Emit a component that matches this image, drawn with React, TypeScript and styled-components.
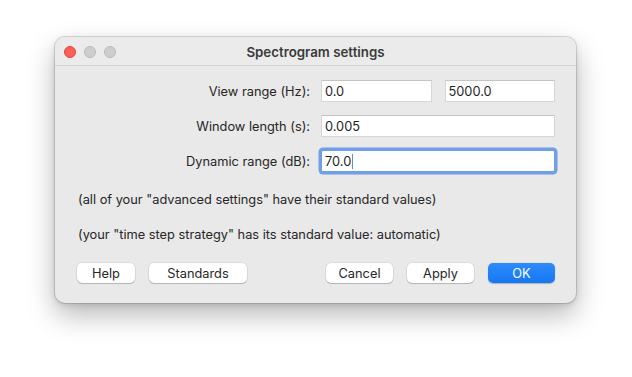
import React from "react";
import styled, { createGlobalStyle } from "styled-components";

const Global = createGlobalStyle`
  html, body { margin: 0; padding: 0; background: #ffffff; }
  body { font-family: Inter, "Liberation Sans", Arial, sans-serif; }
`;

const Page = styled.div`
  width: 632px;
  height: 377px;
  padding: 37px 0 0 55px;
  box-sizing: border-box;
  background: #ffffff;
`;

const Window = styled.div`
  width: 521px;
  height: 266px;
  box-sizing: border-box;
  background: #e9e9e9;
  border-radius: 10px;
  box-shadow: 0 0 0 1px rgba(0, 0, 0, 0.12), 0 12px 28px rgba(0, 0, 0, 0.28),
    0 2px 6px rgba(0, 0, 0, 0.12);
  display: flex;
  flex-direction: column;
  overflow: hidden;
  color: #262626;
  font-size: 12.8px;
`;

const TitleBar = styled.div`
  position: relative;
  height: 29px;
  box-sizing: border-box;
  border-bottom: 1px solid #d3d3d3;
  background: #ebebeb;
  display: flex;
  align-items: center;
  justify-content: center;
  flex-shrink: 0;
`;

const Lights = styled.div`
  position: absolute;
  left: 9px;
  top: 9px;
  display: flex;
  gap: 8px;
`;

const Light = styled.span<{ $color: string; $border: string }>`
  width: 12px;
  height: 12px;
  border-radius: 50%;
  box-sizing: border-box;
  background: ${(p) => p.$color};
  border: 0.5px solid ${(p) => p.$border};
`;

const Title = styled.div`
  font-weight: 600;
  font-size: 13.3px;
  color: #3a3a3a;
  margin-top: 1px;
`;

const Content = styled.div`
  flex: 1;
  padding: 14px 21px 0 22px;
  display: flex;
  flex-direction: column;
`;

const Rows = styled.div`
  display: flex;
  flex-direction: column;
  gap: 13px;
`;

const Row = styled.div`
  display: flex;
  align-items: center;
  height: 22px;
`;

const Label = styled.div`
  flex: 1;
  text-align: right;
  margin-right: 11px;
  white-space: nowrap;
`;

const Fields = styled.div`
  width: 234px;
  display: flex;
  gap: 13px;
`;

const Input = styled.div<{ $focused?: boolean }>`
  flex: 1;
  height: 22px;
  box-sizing: border-box;
  background: #ffffff;
  padding: 0 3px;
  display: flex;
  align-items: center;
  color: #1e1e1e;
  border: 1px solid ${(p) => (p.$focused ? "#6e9fe6" : "#d6d6d6")};
  border-top-color: ${(p) => (p.$focused ? "#6e9fe6" : "#c4c4c4")};
  box-shadow: ${(p) =>
    p.$focused ? "0 0 0 2.5px rgba(90, 145, 230, 0.85)" : "none"};
  border-radius: ${(p) => (p.$focused ? "2px" : "0")};
`;

const Caret = styled.span`
  display: inline-block;
  width: 1px;
  height: 15px;
  background: #5a8fe0;
  margin-left: 1px;
`;

const Note = styled.div`
  line-height: 16px;
  padding-left: 1px;
`;

const Notes = styled.div`
  margin-top: 20px;
  display: flex;
  flex-direction: column;
  gap: 19px;
`;

const ButtonBar = styled.div`
  margin-top: 20px;
  display: flex;
  align-items: center;
`;

const Group = styled.div`
  display: flex;
  gap: 14px;
`;

const Spacer = styled.div`
  flex: 1;
`;

const Button = styled.div<{ $w: number; $primary?: boolean }>`
  width: ${(p) => p.$w}px;
  height: 20px;
  box-sizing: border-box;
  border-radius: 5px;
  display: flex;
  align-items: center;
  justify-content: center;
  background: ${(p) =>
    p.$primary ? "linear-gradient(#2c8cfb, #1677f3)" : "#ffffff"};
  color: ${(p) => (p.$primary ? "#ffffff" : "#262626")};
  box-shadow: ${(p) =>
    p.$primary
      ? "0 0.5px 1px rgba(0,0,0,0.25)"
      : "0 0 0 0.5px rgba(0,0,0,0.12), 0 1px 1px rgba(0,0,0,0.18)"};
`;

export default function App() {
  return (
    <>
      <Global />
      <Page>
        <Window>
          <TitleBar>
            <Lights>
              <Light $color="#fe5f57" $border="#e0443e" />
              <Light $color="#cdcdcd" $border="#b9b9b9" />
              <Light $color="#cdcdcd" $border="#b9b9b9" />
            </Lights>
            <Title>Spectrogram settings</Title>
          </TitleBar>
          <Content>
            <Rows>
              <Row>
                <Label>View range (Hz):</Label>
                <Fields>
                  <Input>0.0</Input>
                  <Input>5000.0</Input>
                </Fields>
              </Row>
              <Row>
                <Label>Window length (s):</Label>
                <Fields>
                  <Input>0.005</Input>
                </Fields>
              </Row>
              <Row>
                <Label>Dynamic range (dB):</Label>
                <Fields>
                  <Input $focused>
                    70.0
                    <Caret />
                  </Input>
                </Fields>
              </Row>
            </Rows>
            <Notes>
              <Note>(all of your "advanced settings" have their standard values)</Note>
              <Note>(your "time step strategy" has its standard value: automatic)</Note>
            </Notes>
            <ButtonBar>
              <Group>
                <Button $w={58}>Help</Button>
                <Button $w={98}>Standards</Button>
              </Group>
              <Spacer />
              <Group>
                <Button $w={67}>Cancel</Button>
                <Button $w={67}>Apply</Button>
                <Button $w={67} $primary>
                  OK
                </Button>
              </Group>
            </ButtonBar>
          </Content>
        </Window>
      </Page>
    </>
  );
}
